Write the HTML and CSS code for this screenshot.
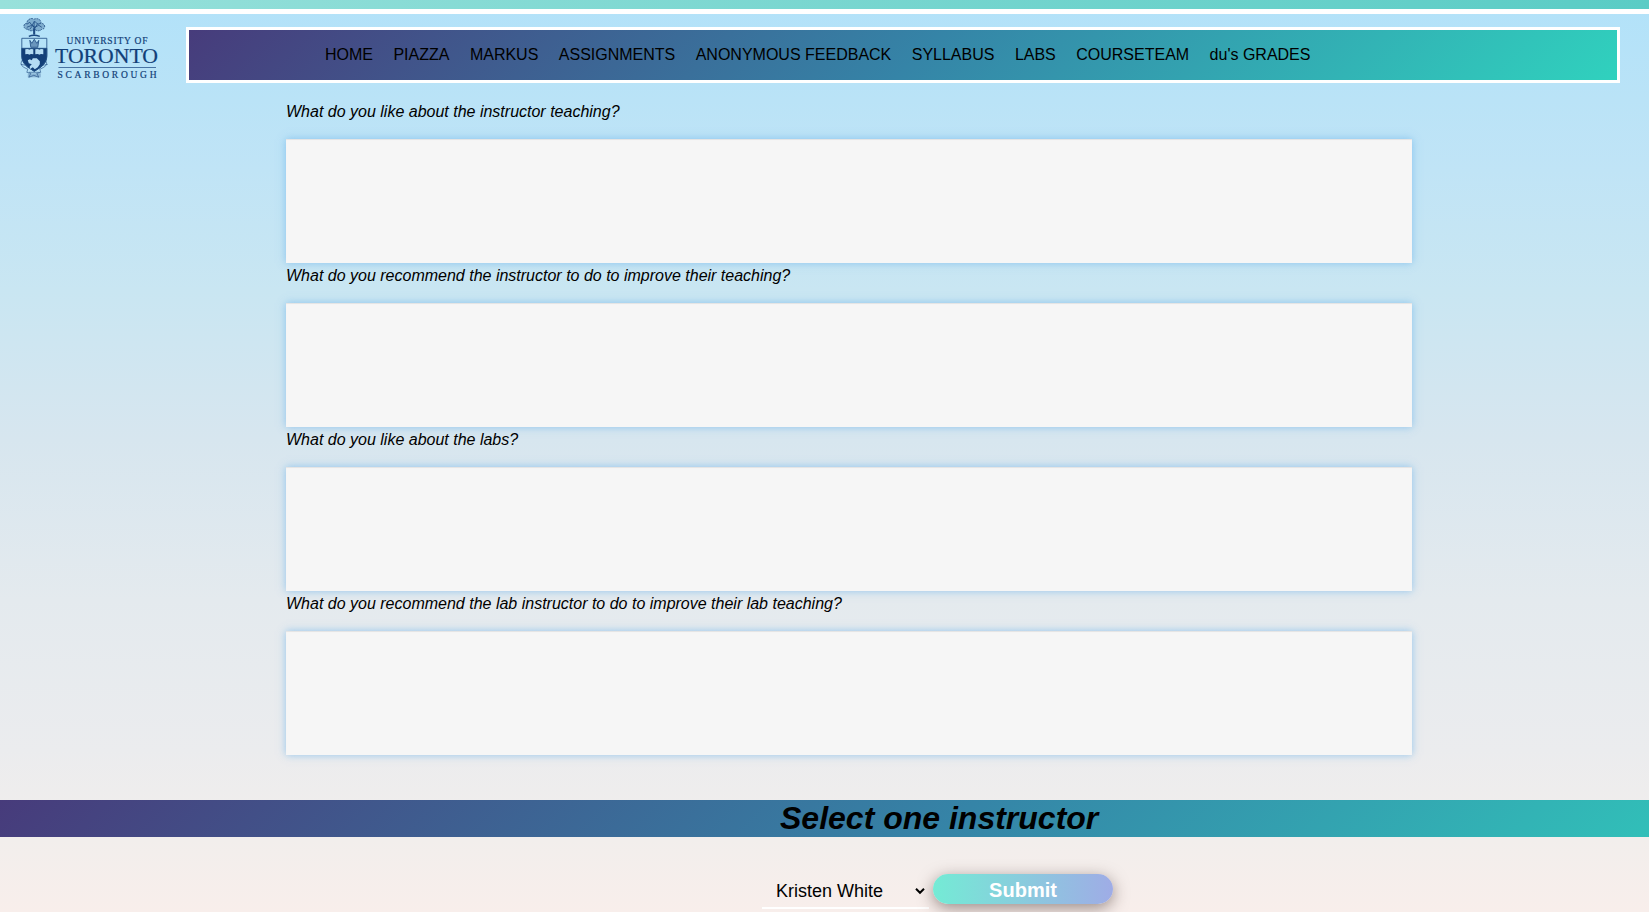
FILE: index.html
```
<!DOCTYPE html>
<html lang="en">
<head>
<meta charset="utf-8">
<title>Anonymous Feedback</title>
<link rel="stylesheet" href="styles.css">
</head>
<body>
<div class="topbar"></div>
<header class="header">
  <svg class="logo" viewBox="0 0 150 68" role="img" aria-label="University of Toronto Scarborough">
    <g class="crest" transform="translate(.8 1.300)" fill="none" stroke="#1d4a82" stroke-width=".8">
      <path d="M7 11c-5 0-5-6-1-6 0-4 5-6 7-4 4-2 8 1 7 4 5 0 5 6 1 6-2 2-5 2-7 0-2 2-5 2-7 0z" fill="#1d4a82" fill-opacity=".35" stroke-dasharray="2 .8"/>
      <path d="M6 6l3-2 2 3 3-4 3 3 3-1M6 9l5-2 3 2 4-2 3 2M9 11l3-4 2 3 3-5M13.300 3v14" />
      <path d="M12.400 10h2v6h-2z" fill="#1d4a82" stroke="none"/>
      <path d="M8 18q5-2 11 0" stroke-width="1.4"/>
      <path d="M1 20h25M1 20v17c0 9 6 12 12.500 16C20 49 26 46 26 37V20" />
      <path d="M1 30h25v8c0 7-6 11-12.500 15C7 49 1 45 1 38z" fill="#123f78"/>
      <path d="M9 22l2 3 2.500-4 2.500 4 2-3-1 7h-7z" fill="#1d4a82" fill-opacity=".5"/>
      <path d="M4.500 31q3-1 4 .5 1-1.500 4-.5v5q-3-1-4 .5-1-1.500-4-.5zM14.500 31q3-1 4 .5 1-1.500 4-.5v5q-3-1-4 .5-1-1.500-4-.5z" fill="#b4dcf3" stroke="none"/>
      <path d="M7 42l2-1 2 1 1-2 4 0 3 3 0 3-2 3-3 2-2-2-3 2 0-3 2-2-3-1z" fill="#b4dcf3" stroke="none"/>
      <path d="M2 41q-4 5 1 8l4 2-1 3 4 1-2 4 5-2 5 2-2-4 4-1-1-3 4-2q5-3 1-8M0 46q6 0 8 4M27 46q-6 0-8 4M8 54h11" stroke-opacity=".75"/>
      <path d="M7 55h13v4H7z" fill="#1d4a82" fill-opacity=".3" stroke="none"/>
    </g>
    <g class="wordmark">
      <text x="46.500" y="27" font-size="9.500" textLength="81">UNIVERSITY OF</text>
      <text x="35" y="45.800" font-size="20.500" textLength="103" lengthAdjust="spacingAndGlyphs">TORONTO</text>
      <path d="M38.500 50.500h97.500" stroke="#3a6698" stroke-width=".9"/>
      <text x="37.500" y="61" font-size="9.500" textLength="99">SCARBOROUGH</text>
    </g>
  </svg>
  <nav class="nav">
    <a>HOME</a><a>PIAZZA</a><a>MARKUS</a><a>ASSIGNMENTS</a><a>ANONYMOUS FEEDBACK</a><a>SYLLABUS</a><a>LABS</a><a>COURSETEAM</a><a>du's GRADES</a>
  </nav>
</header>
<main>
  <div class="questions">
    <label>What do you like about the instructor teaching?</label>
    <textarea class="answer"></textarea>
    <label>What do you recommend the instructor to do to improve their teaching?</label>
    <textarea class="answer"></textarea>
    <label>What do you like about the labs?</label>
    <textarea class="answer"></textarea>
    <label>What do you recommend the lab instructor to do to improve their lab teaching?</label>
    <textarea class="answer"></textarea>
  </div>
  <h1 class="band">Select one instructor</h1>
  <div class="actions">
    <div class="picker">
      <span>Kristen White</span>
      <svg width="10" height="8" viewBox="0 0 10 8"><path d="M1 1.800l4 4 4-4" fill="none" stroke="#000" stroke-width="2"/></svg>
    </div>
    <button class="submit">Submit</button>
  </div>
</main>
</body>
</html>
```
FILE: styles.css
```
* { box-sizing: border-box; }
html { height: 912px; overflow: hidden; }
body {
  margin: 0;
  height: 912px;
  overflow: hidden;
  font: 16px/18px "Liberation Sans", Arial, sans-serif;
  color: #000;
  background: linear-gradient(180deg, #b2e2f9 0, #bae3f7 100px, #c0e4f6 170px, #c9e6f2 290px, #d7e6ef 440px, #e4eaee 600px, #ebecee 750px, #f2eeec 840px, #f8eeeb 912px);
}
.topbar {
  height: 14px;
  border-bottom: 5px solid #fff;
  background: linear-gradient(90deg, #98e1db, #5accc5);
}
.header { display: flex; height: 83px; }
.logo { flex: none; width: 150px; height: 68px; margin: 3px 16px 0 20px; }
.wordmark { font-family: "Liberation Serif", "Times New Roman", serif; fill: #123f78; stroke: #123f78; stroke-width: .2px; }
.nav {
  display: flex;
  align-items: center;
  gap: 20.45px;
  width: 1434px;
  height: 56px;
  margin-top: 13px;
  padding: 0 0 1px 136px;
  border: 3px solid #fff;
  white-space: nowrap;
  background: linear-gradient(135deg, #473b7b 0%, #3584a7 51%, #30d2be 100%);
  background-origin: border-box;
}
.questions { width: 1126px; margin-left: 286px; }
.questions label { display: block; height: 40px; padding-top: 4px; font-style: italic; }
.questions label:first-child { height: 42px; padding-top: 6px; }
.answer {
  display: block;
  width: 100%;
  height: 124px;
  padding: 10px;
  border: 0;
  resize: none;
  background: #f6f6f6;
  box-shadow: 0 0 8px rgba(110, 180, 235, .7), inset 0 1px 1px rgba(0, 0, 0, .075);
}
.band {
  height: 37px;
  margin: 45px 0 0;
  padding-left: 780px;
  font-size: 32px;
  line-height: 37px;
  font-style: italic;
  background: linear-gradient(135deg, #473b7b 0%, #3584a7 51%, #30d2be 100%) 0 0 / 1878px 37px no-repeat;
}
.actions { display: flex; gap: 4px; padding: 37px 0 0 762px; }
.picker {
  display: flex;
  align-items: center;
  justify-content: space-between;
  width: 167px;
  height: 35px;
  padding: 0 4px 0 14px;
  border-bottom: 2px solid #fff;
  font-size: 18px;
}
.submit {
  width: 180px;
  height: 30px;
  padding: 2px 0 0;
  border: 0;
  border-radius: 15px;
  color: #fff;
  font: bold 20px/28px "Liberation Sans", Arial, sans-serif;
  background: linear-gradient(90deg, #74ebd5, #9face6);
  box-shadow: 0 4px 16px rgba(60, 40, 35, .5);
}
```
